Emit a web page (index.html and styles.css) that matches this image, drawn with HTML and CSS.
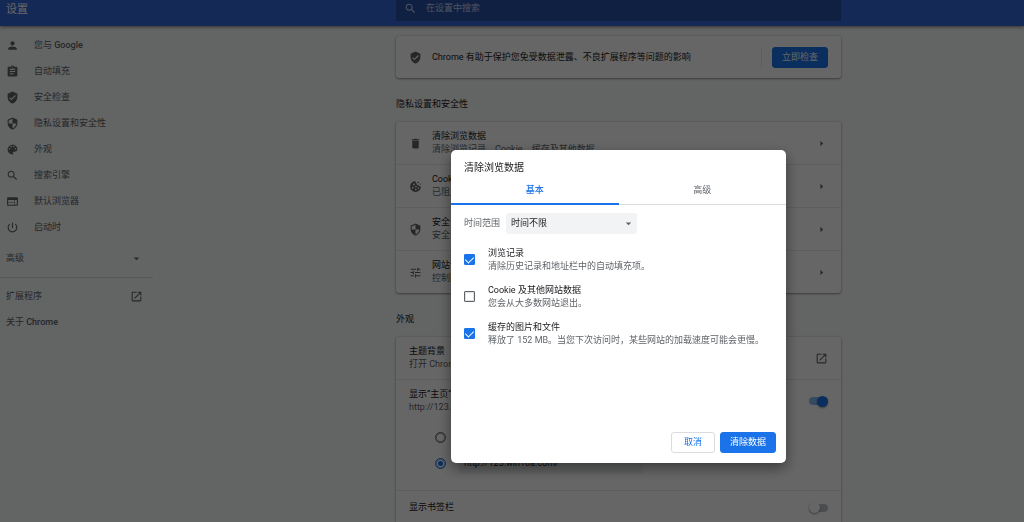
FILE: index.html
```
<!DOCTYPE html>
<html lang="zh-CN">
<head>
<meta charset="utf-8">
<meta name="viewport" content="width=device-width, initial-scale=1">
<title>设置</title>
<link rel="stylesheet" href="styles.css">
</head>
<body>
<svg class="sprite" aria-hidden="true">
  <symbol id="i-person" viewBox="0 0 24 24"><path d="M12 12c2.21 0 4-1.79 4-4s-1.79-4-4-4-4 1.790-4 4 1.790 4 4 4zm0 2c-2.670 0-8 1.340-8 4v2h16v-2c0-2.660-5.330-4-8-4z"/></symbol>
  <symbol id="i-assignment" viewBox="0 0 24 24"><path d="M19 3h-4.180C14.400 1.840 13.300 1 12 1c-1.300 0-2.400.840-2.820 2H5c-1.100 0-2 .900-2 2v14c0 1.100.900 2 2 2h14c1.100 0 2-.900 2-2V5c0-1.100-.900-2-2-2zm-7 0c.550 0 1 .450 1 1s-.450 1-1 1-1-.450-1-1 .450-1 1-1zm2 14H7v-2h7v2zm3-4H7v-2h10v2zm0-4H7V7h10v2z"/></symbol>
  <symbol id="i-verified" viewBox="0 0 24 24"><path d="M12 1L3 5v6c0 5.550 3.840 10.740 9 12 5.160-1.260 9-6.450 9-12V5l-9-4zm-2 16l-4-4 1.410-1.410L10 14.170l6.590-6.590L18 9l-8 8z"/></symbol>
  <symbol id="i-security" viewBox="0 0 24 24"><path d="M12 1L3 5v6c0 5.550 3.840 10.740 9 12 5.160-1.260 9-6.450 9-12V5l-9-4zm0 10.990h7c-.530 4.120-3.280 7.790-7 8.940V12H5V6.300l7-3.110v8.800z"/></symbol>
  <symbol id="i-palette" viewBox="0 0 24 24"><path d="M12 3c-4.970 0-9 4.030-9 9s4.030 9 9 9c.830 0 1.500-.670 1.500-1.500 0-.390-.150-.740-.390-1.010-.230-.260-.380-.610-.380-.990 0-.830.670-1.500 1.500-1.500H16c2.760 0 5-2.240 5-5 0-4.420-4.030-8-9-8zm-5.500 9c-.830 0-1.500-.670-1.500-1.500S5.670 9 6.500 9 8 9.670 8 10.500 7.330 12 6.500 12zm3-4C8.670 8 8 7.330 8 6.500S8.670 5 9.500 5s1.500.670 1.500 1.500S10.330 8 9.500 8zm5 0c-.830 0-1.500-.670-1.500-1.500S13.670 5 14.500 5s1.500.670 1.500 1.500S15.330 8 14.500 8zm3 4c-.830 0-1.500-.670-1.500-1.500S16.670 9 17.500 9s1.500.670 1.500 1.500-.670 1.500-1.500 1.500z"/></symbol>
  <symbol id="i-search" viewBox="0 0 24 24"><path d="M15.500 14h-.790l-.280-.270C15.410 12.590 16 11.110 16 9.500 16 5.910 13.090 3 9.500 3S3 5.910 3 9.500 5.910 16 9.500 16c1.610 0 3.090-.590 4.230-1.570l.270.280v.790l5 4.990L20.490 19l-4.990-5zm-6 0C7.010 14 5 11.990 5 9.500S7.010 5 9.500 5 14 7.010 14 9.500 11.990 14 9.500 14z"/></symbol>
  <symbol id="i-browser" viewBox="0 0 24 24"><path d="M20 4H4c-1.100 0-1.990.900-1.990 2L2 18c0 1.100.900 2 2 2h16c1.100 0 2-.900 2-2V6c0-1.100-.900-2-2-2zm-5 14H4v-4h11v4zm0-5H4V9h11v4zm5 5h-4V9h4v9z"/></symbol>
  <symbol id="i-power" viewBox="0 0 24 24"><path d="M13 3h-2v10h2V3zm4.830 2.170l-1.420 1.420C17.990 7.860 19 9.810 19 12c0 3.870-3.130 7-7 7s-7-3.130-7-7c0-2.190 1.010-4.140 2.580-5.420L6.170 5.170C4.230 6.820 3 9.260 3 12c0 4.970 4.030 9 9 9s9-4.030 9-9c0-2.740-1.230-5.180-3.170-6.830z"/></symbol>
  <symbol id="i-launch" viewBox="0 0 24 24"><path d="M19 19H5V5h7V3H5c-1.110 0-2 .900-2 2v14c0 1.100.890 2 2 2h14c1.100 0 2-.900 2-2v-7h-2v7zM14 3v2h3.590l-9.830 9.830 1.410 1.410L19 6.410V10h2V3h-7z"/></symbol>
  <symbol id="i-delete" viewBox="0 0 24 24"><path d="M6 19c0 1.100.900 2 2 2h8c1.100 0 2-.900 2-2V7H6v12zM19 4h-3.500l-1-1h-5l-1 1H5v2h14V4z"/></symbol>
  <symbol id="i-cookie" viewBox="0 0 24 24"><path fill-rule="evenodd" d="M12 2a10 10 0 1 0 10 10c-2 .3-3.500-.6-4-2.200-2 .4-3.800-1-3.600-3C12.600 6.300 11.500 4.300 12 2zM9 6.500a1.600 1.600 0 1 1 0 3.200 1.600 1.600 0 0 1 0-3.200zM7 12.500a1.600 1.600 0 1 1 0 3.200 1.600 1.600 0 0 1 0-3.200zM12.800 10.800a1.500 1.500 0 1 1 0 3 1.500 1.500 0 0 1 0-3zM12.500 16.300a1.500 1.500 0 1 1 0 3 1.500 1.500 0 0 1 0-3zM17 13.600a1.400 1.400 0 1 1 0 2.800 1.400 1.400 0 0 1 0-2.800z"/><circle cx="17" cy="4.500" r="1.500"/><circle cx="20.500" cy="7.500" r="1.200"/></symbol>
  <symbol id="i-tune" viewBox="0 0 24 24"><path d="M3 17v2h6v-2H3zM3 5v2h10V5H3zm10 16v-2h8v-2h-8v-2h-2v6h2zM7 9v2H3v2h4v2h2V9H7zm14 4v-2H11v2h10zm-6-4h2V7h4V5h-4V3h-2v6z"/></symbol>
  <symbol id="i-down" viewBox="0 0 24 24"><path d="M7 10l5 5 5-5z"/></symbol>
  <symbol id="i-right" viewBox="0 0 24 24"><path d="M10 7l5 5-5 5z"/></symbol>
</svg>

<div class="app">
  <header class="toolbar">
    <h1 class="toolbar-title">设置</h1>
    <div class="toolbar-center">
      <label class="search">
        <svg class="icon"><use href="#i-search"/></svg>
        <input class="search-input" type="search" placeholder="在设置中搜索" aria-label="在设置中搜索">
      </label>
    </div>
  </header>

  <div class="body">
    <nav class="sidebar">
      <a class="nav-item" href="#people"><svg class="icon"><use href="#i-person"/></svg><span>您与 <b class="brand">Google</b></span></a>
      <a class="nav-item" href="#autofill"><svg class="icon"><use href="#i-assignment"/></svg>自动填充</a>
      <a class="nav-item" href="#check"><svg class="icon"><use href="#i-verified"/></svg>安全检查</a>
      <a class="nav-item" href="#privacy"><svg class="icon"><use href="#i-security"/></svg>隐私设置和安全性</a>
      <a class="nav-item" href="#appearance"><svg class="icon"><use href="#i-palette"/></svg>外观</a>
      <a class="nav-item" href="#engine"><svg class="icon"><use href="#i-search"/></svg>搜索引擎</a>
      <a class="nav-item" href="#default"><svg class="icon"><use href="#i-browser"/></svg>默认浏览器</a>
      <a class="nav-item" href="#startup"><svg class="icon"><use href="#i-power"/></svg>启动时</a>
      <button class="nav-advanced" type="button">高级<svg class="icon"><use href="#i-down"/></svg></button>
      <div class="nav-footer">
        <a class="nav-link" href="#extensions">扩展程序<svg class="icon"><use href="#i-launch"/></svg></a>
        <a class="nav-link" href="#about"><span>关于 <b class="brand">Chrome</b></span></a>
      </div>
    </nav>

    <main class="main">
      <div class="column">
        <section class="card check">
          <svg class="icon"><use href="#i-verified"/></svg>
          <p class="check-text">Chrome 有助于保护您免受数据泄露、不良扩展程序等问题的影响</p>
          <div class="check-action"><button class="btn btn-primary" type="button">立即检查</button></div>
        </section>

        <h2 class="section-title" id="privacy">隐私设置和安全性</h2>
        <section class="card">
          <a class="row" href="#clear"><svg class="icon"><use href="#i-delete"/></svg><span class="row-text"><span class="primary">清除浏览数据</span><span class="secondary">清除浏览记录、Cookie、缓存及其他数据</span></span><svg class="icon"><use href="#i-right"/></svg></a>
          <a class="row" href="#cookies"><svg class="icon"><use href="#i-cookie"/></svg><span class="row-text"><span class="primary">Cookie 及其他网站数据</span><span class="secondary">已阻止第三方 Cookie</span></span><svg class="icon"><use href="#i-right"/></svg></a>
          <a class="row" href="#security"><svg class="icon"><use href="#i-security"/></svg><span class="row-text"><span class="primary">安全</span><span class="secondary">安全浏览和其他安全设置</span></span><svg class="icon"><use href="#i-right"/></svg></a>
          <a class="row" href="#site"><svg class="icon"><use href="#i-tune"/></svg><span class="row-text"><span class="primary">网站设置</span><span class="secondary">控制网站可以使用和显示的信息</span></span><svg class="icon"><use href="#i-right"/></svg></a>
        </section>

        <h2 class="section-title" id="appearance">外观</h2>
        <section class="card">
          <a class="row" href="#theme"><span class="row-text"><span class="primary">主题背景</span><span class="secondary">打开 Chrome 网上应用店</span></span><svg class="icon"><use href="#i-launch"/></svg></a>
          <label class="row"><span class="row-text"><span class="primary">显示“主页”按钮</span><span class="secondary">http://123.win10a.com/</span></span><input class="toggle" type="checkbox" checked></label>
          <div class="home-options">
            <label class="home-option"><input class="radio" type="radio" name="home">打开新的标签页</label>
            <div class="home-option"><input class="radio" type="radio" name="home" aria-label="自定义网址" checked><input class="home-url" type="text" value="http://123.win10a.com/" aria-label="主页网址"></div>
          </div>
          <label class="row row-short"><span class="row-text"><span class="primary">显示书签栏</span></span><input class="toggle" type="checkbox"></label>
        </section>
      </div>
    </main>
  </div>
</div>

<div class="backdrop">
  <section class="dialog" role="dialog" aria-modal="true" aria-labelledby="dialog-title">
    <h2 class="dialog-title" id="dialog-title">清除浏览数据</h2>
    <div class="tabs" role="tablist">
      <button class="tab tab-active" type="button" role="tab" aria-selected="true">基本</button>
      <button class="tab" type="button" role="tab" aria-selected="false">高级</button>
    </div>
    <div class="dialog-body">
      <div class="range">
        <label for="range">时间范围</label>
        <div class="select-box">
          <select class="select" id="range"><option>时间不限</option></select>
          <svg class="icon select-arrow"><use href="#i-down"/></svg>
        </div>
      </div>
      <label class="option"><input class="checkbox" type="checkbox" checked><span class="row-text"><span class="primary">浏览记录</span><span class="secondary">清除历史记录和地址栏中的自动填充项。</span></span></label>
      <label class="option"><input class="checkbox" type="checkbox"><span class="row-text"><span class="primary">Cookie 及其他网站数据</span><span class="secondary">您会从大多数网站退出。</span></span></label>
      <label class="option"><input class="checkbox" type="checkbox" checked><span class="row-text"><span class="primary">缓存的图片和文件</span><span class="secondary">释放了 152 MB。当您下次访问时，某些网站的加载速度可能会更慢。</span></span></label>
    </div>
    <div class="dialog-actions">
      <button class="btn" type="button">取消</button>
      <button class="btn btn-primary" type="button">清除数据</button>
    </div>
  </section>
</div>
</body>
</html>
```
FILE: styles.css
```
:root {
  --blue: #1a73e8;
  --text: #202124;
  --muted: #5f6368;
  --line: #e8eaed;
  --sidebar: 213px;
}

* { box-sizing: border-box; }

body {
  margin: 0;
  background: #f8f9fa;
  color: var(--text);
  font: 9px/13px Roboto, "Noto Sans CJK SC", sans-serif;
}

h1, h2, p { margin: 0; font-weight: 400; }
a { color: inherit; text-decoration: none; }
button, input, select { font: inherit; color: inherit; margin: 0; }

.sprite { display: none; }

.icon {
  flex: none;
  width: 13px;
  height: 13px;
  fill: var(--muted);
}

.app {
  display: flex;
  flex-direction: column;
  height: 100vh;
  overflow: hidden;
}

/* Toolbar */
.toolbar {
  position: relative;
  z-index: 1;
  flex: none;
  display: grid;
  grid-template-columns: var(--sidebar) minmax(0, 1fr);
  padding-bottom: 5px;
  background: #3367d6;
  color: #fff;
  box-shadow: 0 1px 3px rgba(0, 0, 0, .5);
}

.toolbar-title { padding-left: 6px; font-size: 11px; line-height: 19px; }
.toolbar-center { display: flex; justify-content: center; }

.search {
  display: flex;
  align-items: center;
  gap: 9px;
  width: 100%;
  max-width: 445px;
  padding: 0 8px 5px;
  background: #2850a7;
}

.search .icon { fill: #c2d1f3; }

.search-input {
  flex: 1;
  height: 16px;
  padding: 0;
  border: 0;
  outline: 0;
  background: none;
}

.search-input::placeholder { color: #c2d1f3; opacity: 1; }

/* Side menu */
.body {
  flex: 1;
  display: grid;
  grid-template-columns: var(--sidebar) minmax(0, 1fr);
  min-height: 0;
}

.sidebar {
  width: 153px;
  padding-top: 6px;
  color: var(--muted);
}

.brand { font-weight: 500; }

.nav-item {
  display: flex;
  align-items: center;
  gap: 15px;
  height: 26px;
  padding-left: 6px;
}

.nav-advanced, .nav-link {
  display: flex;
  align-items: center;
  justify-content: space-between;
  width: 100%;
  height: 26px;
  padding: 0 10px 0 6px;
}

.nav-advanced {
  height: 37px;
  border: 0;
  background: none;
}

.nav-footer { padding-top: 5px; border-top: 1px solid #dadce0; }

/* Main column */
.main { display: flex; justify-content: center; }
.column { flex: 1; max-width: 445px; padding-top: 10px; }

.card {
  background: #fff;
  border-radius: 3px;
  box-shadow: 0 1px 2px rgba(60, 64, 67, .5), 0 0 2px rgba(60, 64, 67, .25);
}

.section-title {
  padding: 20px 0 11px;
  font-size: 9px;
  line-height: 13px;
}

.check {
  display: flex;
  align-items: center;
  gap: 10px;
  min-height: 42px;
  padding: 0 13px;
}

.check-text { flex: 1; }
.check-action { padding-left: 10px; border-left: 1px solid var(--line); }

.row {
  box-sizing: content-box;
  display: flex;
  align-items: center;
  gap: 10px;
  height: 42px;
  padding: 0 13px;
}

.row + .row, .row-short { border-top: 1px solid var(--line); }
.row-short { height: 33px; }
.row-text { flex: 1; display: flex; flex-direction: column; }
.secondary { color: var(--muted); }

.home-options { padding: 2px 0 14px 39px; }

.home-option {
  display: flex;
  align-items: center;
  gap: 13px;
  height: 26px;
}

.home-url {
  width: 184px;
  height: 21px;
  padding: 0 5px;
  border: 0;
  border-radius: 3px;
  background: #f1f3f4;
}

/* Controls */
.btn {
  height: 21px;
  padding: 0 12px;
  border: 1px solid #dadce0;
  border-radius: 3px;
  background: #fff;
  color: var(--blue);
}

.btn-primary {
  padding: 0 9px;
  border-color: var(--blue);
  background: var(--blue);
  color: #fff;
}

.radio {
  appearance: none;
  flex: none;
  display: grid;
  place-items: center;
  width: 11px;
  height: 11px;
  border: 1px solid var(--muted);
  border-radius: 50%;
  box-shadow: inset 0 0 0 1px rgba(95, 99, 104, .5);
}

.radio:checked { border-color: var(--blue); box-shadow: inset 0 0 0 1px rgba(26, 115, 232, .5); }

.radio:checked::after {
  content: "";
  width: 5px;
  height: 5px;
  border-radius: 50%;
  background: var(--blue);
}

.toggle {
  appearance: none;
  flex: none;
  display: flex;
  align-items: center;
  width: 19px;
  height: 8px;
  margin-left: 2px;
  border-radius: 4px;
  background: #bdc1c6;
}

.toggle::after {
  content: "";
  flex: none;
  width: 11px;
  height: 11px;
  border-radius: 50%;
  background: #fff;
  box-shadow: 0 1px 2px rgba(0, 0, 0, .4);
}

.toggle:checked { justify-content: flex-end; background: #8db9f4; }
.toggle:checked::after { background: var(--blue); }

.checkbox {
  appearance: none;
  flex: none;
  display: grid;
  place-items: center;
  width: 11px;
  height: 11px;
  border: 1px solid var(--muted);
  border-radius: 1px;
  box-shadow: inset 0 0 0 1px rgba(95, 99, 104, .2);
}

.checkbox:checked { border-color: var(--blue); background: var(--blue); box-shadow: none; }

.checkbox:checked::after {
  content: "";
  width: 4px;
  height: 7px;
  margin-bottom: 2px;
  border: solid #fff;
  border-width: 0 1px 1px 0;
  transform: rotate(45deg);
}

/* Dialog */
.backdrop {
  position: fixed;
  inset: 0;
  z-index: 2;
  display: flex;
  justify-content: center;
  align-items: flex-start;
  padding: 150px 0 0 var(--sidebar);
  background: rgba(0, 0, 0, .6);
}

.dialog {
  display: flex;
  flex-direction: column;
  width: 335px;
  background: #fff;
  border-radius: 5px;
  box-shadow: 0 5px 14px rgba(0, 0, 0, .45);
}

.dialog-title {
  padding: 11px 13px 3px;
  font-size: 10px;
  line-height: 13px;
}

.tabs { display: flex; border-bottom: 1px solid #dadce0; }

.tab {
  flex: 1;
  height: 28px;
  margin-bottom: -1px;
  padding: 0;
  border: 0;
  border-bottom: 2px solid transparent;
  background: none;
  color: var(--muted);
}

.tab-active { border-color: var(--blue); color: var(--blue); font-weight: 500; }

.dialog-body { padding: 8px 13px 80px; }

.range {
  display: flex;
  align-items: center;
  gap: 6px;
  margin-bottom: 7px;
  color: var(--muted);
}

.select-box { position: relative; width: 131px; color: var(--text); }

.select {
  appearance: none;
  display: block;
  width: 100%;
  height: 21px;
  padding: 0 20px 0 5px;
  border: 0;
  border-radius: 3px;
  background: #f1f3f4;
}

.select-arrow {
  position: absolute;
  top: 4px;
  right: 2px;
  pointer-events: none;
}

.option {
  display: flex;
  align-items: center;
  gap: 13px;
  height: 37px;
}

.dialog-actions {
  display: flex;
  justify-content: flex-end;
  gap: 5px;
  padding: 0 10px 10px;
}
```
